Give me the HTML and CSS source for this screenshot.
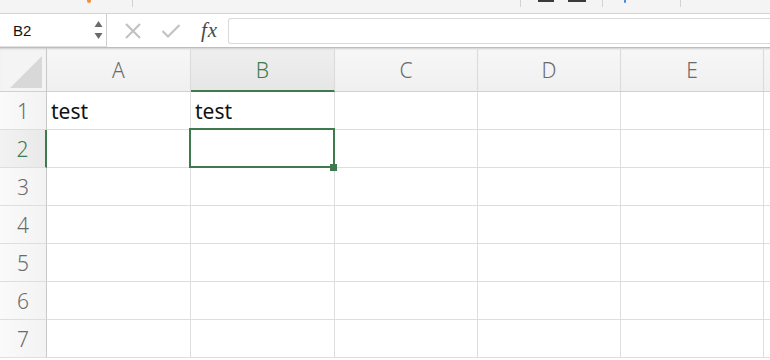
FILE: index.html
```html
<!DOCTYPE html>
<html lang="en">
<head>
    <meta charset="UTF-8">
    <title>Sheet</title>
    <link rel="stylesheet" href="styles.css">
</head>
<body>
    <div class="ribbon">
        <span class="mark orange" style="margin-left: 87px"></span>
        <span class="sep" style="margin-left: 41px"></span>
        <span class="sep" style="margin-left: 387px"></span>
        <span class="bar" style="margin-left: 17px; width: 16px"></span>
        <span class="bar" style="margin-left: 14px; width: 18px"></span>
        <span class="sep" style="margin-left: 16px"></span>
        <span class="mark blue" style="margin-left: 21px"></span>
        <span class="sep" style="margin-left: 54px"></span>
    </div>

    <div class="formula-bar">
        <div class="name-box">
            <span class="name">B2</span>
            <span class="spinner">
                <svg width="9" height="20" viewBox="0 0 9 20">
                    <polygon points="4.5,1 8.5,7 0.5,7" fill="#6a6a6a"/>
                    <polygon points="0.5,13 8.5,13 4.5,19" fill="#6a6a6a"/>
                </svg>
            </span>
        </div>
        <div class="actions">
            <svg width="18" height="18" viewBox="0 0 18 18">
                <path d="M2 2 L16 16 M16 2 L2 16" stroke="#c2c2c2" stroke-width="2.2" fill="none"/>
            </svg>
            <svg width="20" height="16" viewBox="0 0 20 16">
                <path d="M1.5 8 L7 13.5 L18.5 2" stroke="#c2c2c2" stroke-width="2.2" fill="none"/>
            </svg>
            <span class="fx">fx</span>
        </div>
        <div class="formula-input"></div>
    </div>

    <div class="sheet">
        <div class="corner"><span class="tri"></span></div>
        <div class="col-head">A</div>
        <div class="col-head active">B</div>
        <div class="col-head">C</div>
        <div class="col-head">D</div>
        <div class="col-head">E</div>
        <div class="col-head"></div>

        <div class="row-head">1</div>
        <div class="cell">test</div>
        <div class="cell">test</div>
        <div class="cell"></div><div class="cell"></div><div class="cell"></div><div class="cell"></div>

        <div class="row-head active">2</div>
        <div class="cell"></div>
        <div class="cell selected"><span class="handle"></span></div>
        <div class="cell"></div><div class="cell"></div><div class="cell"></div><div class="cell"></div>

        <div class="row-head">3</div>
        <div class="cell"></div><div class="cell"></div><div class="cell"></div><div class="cell"></div><div class="cell"></div><div class="cell"></div>

        <div class="row-head">4</div>
        <div class="cell"></div><div class="cell"></div><div class="cell"></div><div class="cell"></div><div class="cell"></div><div class="cell"></div>

        <div class="row-head">5</div>
        <div class="cell"></div><div class="cell"></div><div class="cell"></div><div class="cell"></div><div class="cell"></div><div class="cell"></div>

        <div class="row-head">6</div>
        <div class="cell"></div><div class="cell"></div><div class="cell"></div><div class="cell"></div><div class="cell"></div><div class="cell"></div>

        <div class="row-head">7</div>
        <div class="cell"></div><div class="cell"></div><div class="cell"></div><div class="cell"></div><div class="cell"></div><div class="cell"></div>
    </div>
</body>
</html>
```

FILE: styles.css
```css
/* General */
body {
    margin: 0;
    font-family: "Noto Sans", "Liberation Sans", sans-serif;
    background: #fff;
    width: 770px;
    height: 360px;
    overflow: hidden;
}

/* Ribbon leftovers at the top */
.ribbon {
    height: 13px;
    background: #f4f4f4;
    border-bottom: 1px solid #d4d4d4;
    display: flex;
    align-items: flex-start;
}

.sep {
    width: 1px;
    height: 7px;
    background: #d2d2d2;
}

.bar {
    height: 2px;
    background: #3a3a3a;
}

.mark {
    width: 4px;
    height: 3px;
    border-radius: 0 0 2px 2px;
}

.mark.orange {
    background: #f0913a;
}

.mark.blue {
    width: 2px;
    background: #4a8be0;
}

/* Formula bar */
.formula-bar {
    height: 33px;
    display: flex;
    border-bottom: 1px solid #bdbdbd;
    background: #fff;
}

.name-box {
    width: 107px;
    display: flex;
    align-items: center;
    justify-content: space-between;
    border-right: 1px solid #cfcfcf;
    border-bottom: 1px solid #e2e2e2;
    box-sizing: border-box;
    padding: 0 3px 0 13px;
}

.name {
    font-family: "Liberation Sans", sans-serif;
    font-size: 15px;
    color: #111;
}

.spinner svg {
    display: block;
}

.actions {
    width: 120px;
    display: flex;
    align-items: center;
    padding-left: 17px;
    box-sizing: border-box;
}

.actions svg:nth-child(2) {
    margin-left: 19px;
}

.fx {
    margin-left: 20px;
    font-family: "Liberation Serif", serif;
    font-style: italic;
    font-size: 21px;
    color: #4a4a4a;
    letter-spacing: 1px;
}

.formula-input {
    flex: 1;
    margin: 4px 0 3px 1px;
    border: 1px solid #dadada;
    border-right: none;
    border-radius: 3px 0 0 3px;
}

/* Spreadsheet grid */
.sheet {
    display: grid;
    grid-template-columns: 47px 144px 144px 143px 143px 143px 1fr;
    grid-template-rows: 44px;
    grid-auto-rows: 38px;
}

.corner,
.col-head,
.row-head,
.cell {
    box-sizing: border-box;
}

.corner {
    background: #f4f4f4;
    border-right: 1px solid #c9c9c9;
    border-bottom: 1px solid #d0d0d0;
    box-shadow: inset 0 2px 2px -1px #cfcfcf;
    display: flex;
    align-items: flex-end;
    padding: 0 3px 3px 10px;
}

.tri {
    display: block;
    width: 32px;
    height: 32px;
    background: #d8d8d8;
    clip-path: polygon(100% 0, 100% 100%, 0 100%);
}

.col-head {
    background: linear-gradient(#f7f7f7, #f0f0f0);
    border-right: 1px solid #dcdcdc;
    border-bottom: 1px solid #d0d0d0;
    box-shadow: inset 0 2px 2px -1px #cfcfcf;
    display: flex;
    align-items: center;
    justify-content: center;
    font-size: 21px;
    font-weight: 300;
    color: #6b6b6b;
    padding-top: 1px;
}

.col-head.active {
    background: linear-gradient(#efefef, #e6e6e6);
    border-bottom: 2px solid #3e7a4e;
    color: #3e7a4e;
}

.row-head {
    background: linear-gradient(to right, #fafafa, #f3f3f3);
    border-right: 1px solid #c9c9c9;
    border-bottom: 1px solid #dedede;
    display: flex;
    align-items: center;
    justify-content: center;
    font-size: 21px;
    font-weight: 300;
    color: #6b6b6b;
}

.row-head.active {
    background: linear-gradient(to right, #f2f2f2, #e9e9e9);
    border-right: 2px solid #3e7a4e;
    color: #3e7a4e;
}

.cell {
    border-right: 1px solid #dedede;
    border-bottom: 1px solid #dedede;
    display: flex;
    align-items: center;
    padding: 0 4px;
    font-size: 21px;
    color: #111;
}

/* Selected cell */
.cell.selected {
    position: relative;
}

.cell.selected::after {
    content: "";
    position: absolute;
    top: -2px;
    left: -2px;
    right: -1px;
    bottom: -1px;
    border: 2px solid #3e7a4e;
}

.handle {
    position: absolute;
    right: -3px;
    bottom: -4px;
    width: 7px;
    height: 7px;
    background: #3e7a4e;
    z-index: 1;
}
```
